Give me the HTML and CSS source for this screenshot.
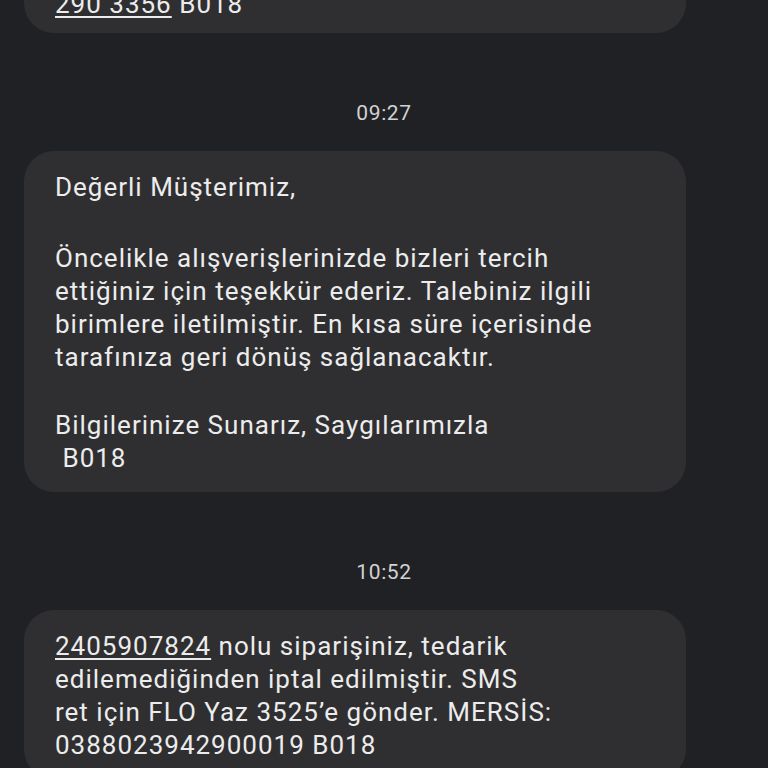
FILE: index.html
```html
<!DOCTYPE html>
<html lang="tr">
<head>
<meta charset="utf-8">
<link rel="stylesheet" href="styles.css">
</head>
<body>
<div class="thread">
  <div class="bubble bubble-top">
    <p>FLO'dan yeni bir mesajınız var. Detaylar için</p>
    <p><span class="link">290 3356</span> B018</p>
  </div>
  <div class="time">09:27</div>
  <div class="bubble">
    <p>Değerli Müşterimiz,</p>
    <p class="para first">Öncelikle alışverişlerinizde bizleri tercih<br>ettiğiniz için teşekkür ederiz. Talebiniz ilgili<br>birimlere iletilmiştir. En kısa süre içerisinde<br>tarafınıza geri dönüş sağlanacaktır.</p>
    <p class="para">Bilgilerinize Sunarız, Saygılarımızla<br>&nbsp;B018</p>
  </div>
  <div class="time">10:52</div>
  <div class="bubble">
    <p><span class="link">2405907824</span> nolu siparişiniz, tedarik<br>edilemediğinden iptal edilmiştir. SMS<br>ret için FLO Yaz 3525’e gönder. MERSİS:<br>0388023942900019 B018</p>
  </div>
</div>
</body>
</html>
```
FILE: styles.css
```css
html, body {
  margin: 0;
  padding: 0;
  background: #202124;
  height: 768px;
  overflow: hidden;
}
.thread {
  display: flex;
  flex-direction: column;
  align-items: flex-start;
  padding-left: 24px;
  font-family: Roboto, "Noto Sans", sans-serif;
}
.bubble {
  box-sizing: border-box;
  width: 662px;
  background: #2f2f31;
  border-radius: 30px;
  padding: 20px 20px 17px 31px;
  color: #ececec;
  font-size: 26px;
  letter-spacing: 1px;
  line-height: 33px;
}
.bubble p {
  margin: 0;
}
.bubble .para {
  margin-top: 35px;
}
.bubble .para.first {
  margin-top: 38px;
}
.bubble-top {
  margin-top: -65px;
  padding-bottom: 12px;
}
.link {
  text-decoration: underline;
  text-underline-offset: 3px;
  text-decoration-thickness: 1.5px;
}
.time {
  align-self: stretch;
  margin-left: -24px;
  text-align: center;
  color: #d2d2d2;
  font-size: 21px;
  letter-spacing: 0.6px;
  line-height: 24px;
  margin-top: 68px;
  margin-bottom: 26px;
}
```
